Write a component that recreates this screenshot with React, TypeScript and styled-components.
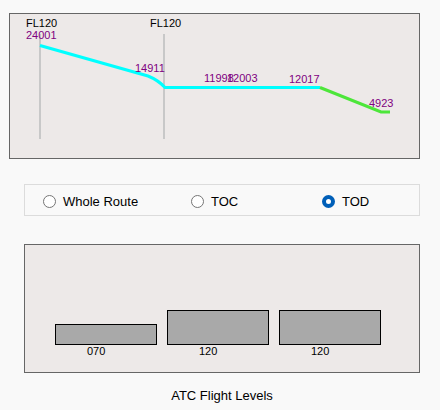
import React from "react";
import styled, { createGlobalStyle } from "styled-components";

const GlobalStyle = createGlobalStyle`
  html, body {
    margin: 0;
    padding: 0;
    background: #f9f9f9;
    font-family: "Liberation Sans", Arial, sans-serif;
    color: #000;
  }
`;

const Page = styled.div`
  width: 440px;
  height: 410px;
  padding-top: 13px;
  box-sizing: border-box;
`;

const ProfilePanel = styled.div`
  margin-left: 9px;
  width: 411px;
  height: 146px;
  box-sizing: border-box;
  border: 1px solid #666;
  background: #ede9e8;
`;

const ChartSvg = styled.svg`
  display: block;
  font-family: "Liberation Sans", Arial, sans-serif;
  font-size: 11px;
`;

const Section = styled.div`
  margin-left: 24px;
  width: 396px;
  box-sizing: border-box;
`;

const RadioBox = styled(Section)`
  margin-top: 25px;
  height: 32px;
  border: 1px solid #dcdcdc;
  display: grid;
  grid-template-columns: 148px 131px 1fr;
  align-items: center;
  padding-left: 18px;
`;

const RadioLabel = styled.label`
  display: flex;
  align-items: center;
  gap: 7px;
  font-size: 13px;
  line-height: 15px;
  padding-top: 2px;
  cursor: pointer;
`;

const RadioDot = styled.span<{ $checked?: boolean }>`
  width: 13px;
  height: 13px;
  box-sizing: border-box;
  border-radius: 50%;
  border: ${(p) => (p.$checked ? "4px solid #005fb8" : "1px solid #767676")};
  background: #fff;
  flex: none;
`;

const LevelsPanel = styled(Section)`
  margin-top: 28px;
  height: 129px;
  border: 1px solid #666;
  background: #ede9e8;
  display: flex;
  align-items: flex-end;
  gap: 10px;
  padding: 0 0 14px 30px;
`;

const LevelColumn = styled.div`
  display: flex;
  flex-direction: column;
  width: 102px;
`;

const Bar = styled.div<{ $height: number }>`
  height: ${(p) => p.$height}px;
  box-sizing: border-box;
  border: 1px solid #000;
  background: #a9a9a9;
`;

const BarLabel = styled.div`
  margin-left: 32px;
  font-size: 11px;
  line-height: 13px;
`;

const Caption = styled(Section)`
  margin-top: 15px;
  text-align: center;
  font-size: 13px;
  line-height: 15px;
`;

const purple = "#800080";

const altitudes = [
  { x: 16, y: 25, v: "24001" },
  { x: 125, y: 58, v: "14911" },
  { x: 194, y: 68, v: "11998" },
  { x: 217, y: 68, v: "12003" },
  { x: 279, y: 68.5, v: "12017" },
  { x: 359, y: 92.5, v: "4923" },
];

const levels = [
  { label: "070", height: 21 },
  { label: "120", height: 35 },
  { label: "120", height: 35 },
];

const ProfileChart = () => (
  <ChartSvg width={409} height={144} viewBox="0 0 409 144">
    <rect x={29} y={20} width={2} height={105} fill="#c8c8c8" />
    <rect x={153} y={20} width={2} height={105} fill="#c8c8c8" />
    <text x={16} y={13} fill="#000">FL120</text>
    <text x={140} y={13} fill="#000">FL120</text>
    <path
      d="M30,31.5 L138,62 Q148,66 155,73.5 L310,73.5"
      stroke="#00ffff"
      strokeWidth={3}
      fill="none"
    />
    <path
      d="M310,73.5 L371,98 L380,98"
      stroke="#4de63a"
      strokeWidth={3}
      fill="none"
    />
    {altitudes.map((a) => (
      <text key={a.v} x={a.x} y={a.y} fill={purple}>
        {a.v}
      </text>
    ))}
  </ChartSvg>
);

const options = ["Whole Route", "TOC", "TOD"];

export default function App() {
  const selected = "TOD";
  return (
    <Page>
      <GlobalStyle />
      <ProfilePanel>
        <ProfileChart />
      </ProfilePanel>
      <RadioBox>
        {options.map((o) => (
          <RadioLabel key={o}>
            <RadioDot $checked={o === selected} />
            {o}
          </RadioLabel>
        ))}
      </RadioBox>
      <LevelsPanel>
        {levels.map((l, i) => (
          <LevelColumn key={i}>
            <Bar $height={l.height} />
            <BarLabel>{l.label}</BarLabel>
          </LevelColumn>
        ))}
      </LevelsPanel>
      <Caption>ATC Flight Levels</Caption>
    </Page>
  );
}
